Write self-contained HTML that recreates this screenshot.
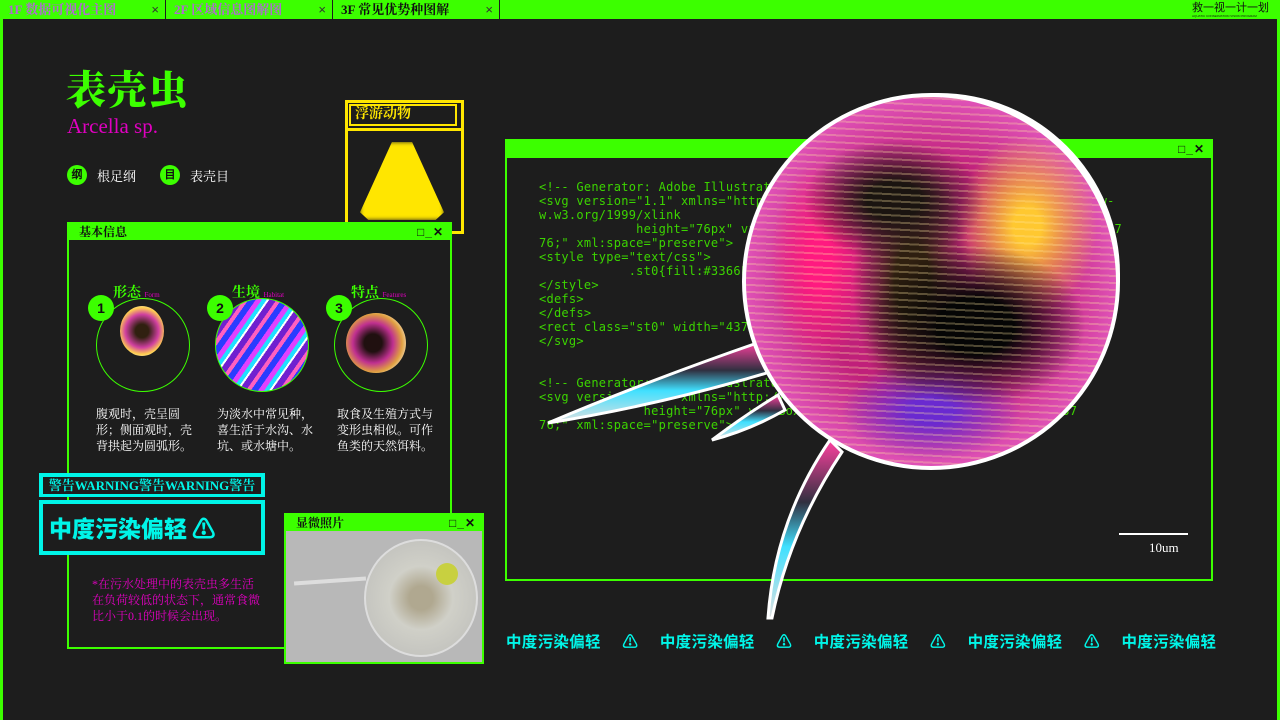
<!DOCTYPE html>
<html><head><meta charset="utf-8"><style>
*{margin:0;padding:0;box-sizing:border-box}
body{width:1280px;height:720px;background:#1d1d1d;position:relative;overflow:hidden;font-family:"Liberation Serif","Noto Serif CJK SC",serif}
.abs{position:absolute}
.g{background:#3cff00}
.tab{position:absolute;top:0;height:20px;background:#3cff00;font-size:13px;font-weight:bold;line-height:20px;padding-left:8px;color:#b06bd0;border-right:1px solid #1d1d1d}
.tab span{position:absolute;right:6px;top:0;color:#333;font-family:"Liberation Sans",sans-serif;font-weight:normal}
.win{position:absolute;border:2px solid #3cff00}
.win .bar{position:absolute;left:0;right:0;top:0;height:16px;background:#3cff00;font-size:12px;font-weight:bold;color:#111;padding-left:10px;line-height:16px}
.win .bar i{position:absolute;right:6px;top:0;font-style:normal;font-family:"Liberation Sans",sans-serif;font-size:12px;color:#111;letter-spacing:1px}
.code{font-family:"DejaVu Sans Mono","Liberation Mono",monospace;color:#3cd400;font-size:12px;line-height:14px;letter-spacing:0.25px;white-space:pre}
.circ{position:absolute;width:94px;height:94px;border:1.5px solid #3cff00;border-radius:50%}
.num{position:absolute;width:26px;height:26px;border-radius:50%;background:#3cff00;color:#111;font-weight:bold;text-align:center;line-height:26px;font-size:14px;font-family:"Liberation Sans",sans-serif}
.lbl{position:absolute;color:#3cff00;font-weight:bold;font-size:14px}
.lbl small{color:#e000c0;font-size:7px;font-weight:normal}
.desc{position:absolute;color:#fff;font-size:12px;line-height:16px;width:120px;white-space:nowrap}
.cy{color:#00f5e8;font-weight:bold;font-family:"Noto Sans CJK SC",sans-serif}
</style></head><body>
<div class="abs g" style="left:0;top:0;width:1280px;height:20px"></div>
<div class="abs g" style="left:0;top:0;width:3px;height:720px"></div>
<div class="abs g" style="right:0;top:0;width:3px;height:720px"></div>
<div class="tab" style="left:0;width:166px">1F 数据可视化主图<span>×</span></div>
<div class="tab" style="left:166px;width:167px">2F 区域信息图解图<span>×</span></div>
<div class="tab" style="left:333px;width:167px;color:#111">3F 常见优势种图解<span>×</span></div>
<div class="abs" style="left:3px;top:19px;width:497px;height:2px;background:#1d1d1d"></div>
<div class="abs" style="left:500px;top:19px;width:777px;height:2px;background:#1d1d1d"></div>
<div class="abs" style="left:1192px;top:1px;font-size:11px;color:#111;font-family:'Noto Sans CJK SC',sans-serif;line-height:13px">救一视一计一划</div>
<div class="abs" style="left:1192px;top:14px;font-size:3px;color:#111;font-family:'Liberation Sans'">AQUATIC CONSERVATION VISION PROGRAM</div>

<div class="abs" style="left:66px;top:64px;font-size:40px;font-weight:900;color:#3cff00;line-height:48px;letter-spacing:1px;font-family:'Noto Serif CJK SC',serif">表壳虫</div>
<div class="abs" style="left:67px;top:114px;font-size:21px;color:#e000c0">Arcella sp.</div>
<div class="abs num" style="left:67px;top:165px;width:20px;height:20px;line-height:20px;font-size:11px">纲</div>
<div class="abs" style="left:97px;top:166px;font-size:13px;color:#fff">根足纲</div>
<div class="abs num" style="left:160px;top:165px;width:20px;height:20px;line-height:20px;font-size:11px">目</div>
<div class="abs" style="left:190px;top:166px;font-size:13px;color:#fff">表壳目</div>

<div class="abs" style="left:345px;top:100px;width:119px;height:134px;border:3px solid #ffe600"></div>
<div class="abs" style="left:349px;top:104px;width:108px;height:22px;border:2px solid #ffe600;color:#ffe600;font-weight:bold;font-size:14px;line-height:18px;padding-left:4px">浮游动物</div>
<div class="abs" style="left:348px;top:128px;width:113px;height:3px;background:#ffe600"></div>
<div class="abs" style="left:360px;top:142px;width:84px;height:78px;background:#ffe600;clip-path:polygon(38% 0,62% 0,100% 90%,90% 100%,10% 100%,0 90%);filter:blur(2px)"></div>

<div class="win" style="left:67px;top:222px;width:385px;height:427px"><div class="bar">基本信息<i>□_✕</i></div></div>
<div class="circ" style="left:96px;top:298px"></div>
<div class="circ" style="left:215px;top:298px;background:repeating-linear-gradient(125deg,#2a3cff 0 6px,#e040ff 6px 11px,#20e0ff 11px 15px,#ffffff 15px 17px,#7020d0 17px 23px,#ff60c0 23px 27px)"></div>
<div class="circ" style="left:334px;top:298px"></div>
<div class="abs" style="left:120px;top:306px;width:44px;height:50px;border-radius:50%;background:radial-gradient(circle at 50% 50%,#302010 20%,#d040a0 50%,#ffd050 70%,#e0e0ff 90%)"></div>
<div class="abs" style="left:346px;top:313px;width:60px;height:60px;border-radius:50%;background:radial-gradient(circle at 45% 50%,#201010 20%,#c03090 45%,#e0a040 65%,#ffffff 88%)"></div>
<div class="num" style="left:88px;top:295px">1</div>
<div class="num" style="left:207px;top:295px">2</div>
<div class="num" style="left:326px;top:295px">3</div>
<div class="lbl" style="left:113px;top:282px">形态 <small>Form</small></div>
<div class="lbl" style="left:232px;top:282px">生境 <small>Habitat</small></div>
<div class="lbl" style="left:351px;top:282px">特点 <small>Features</small></div>
<div class="desc" style="left:96px;top:406px">腹观时，壳呈圆<br>形；侧面观时，壳<br>背拱起为圆弧形。</div>
<div class="desc" style="left:217px;top:406px">为淡水中常见种，<br>喜生活于水沟、水<br>坑、或水塘中。</div>
<div class="desc" style="left:337px;top:406px">取食及生殖方式与<br>变形虫相似。可作<br>鱼类的天然饵料。</div>

<div class="abs" style="left:39px;top:473px;width:226px;height:24px;background:#00f5e8"></div>
<div class="abs" style="left:43px;top:477px;width:218px;height:17px;background:#1d1d1d;color:#00f5e8;font-size:13px;line-height:17px;text-align:center;font-weight:bold">警告WARNING警告WARNING警告</div>
<div class="abs" style="left:39px;top:500px;width:226px;height:55px;background:#00f5e8"></div>
<div class="abs cy" style="left:43px;top:504px;width:218px;height:47px;background:#1d1d1d;font-size:23px;line-height:47px;padding-left:6px;font-weight:900">中度污染偏轻 ⚠</div>
<div class="abs" style="left:92px;top:576px;color:#e000c0;font-size:12px;line-height:16px;width:168px">*在污水处理中的表壳虫多生活在负荷较低的状态下，通常食微比小于0.1的时候会出现。</div>

<div class="win" style="left:284px;top:513px;width:200px;height:151px;background:#b8b8b8"><div class="bar">显微照片<i>□_✕</i></div>
<div class="abs" style="left:78px;top:24px;width:114px;height:118px;border-radius:50%;border:2px solid #ddd;background:radial-gradient(circle at 50% 50%,#b0a890 15%,#d0d0c8 40%,#c0c0bc 85%)"></div>
<div class="abs" style="left:150px;top:48px;width:22px;height:22px;border-radius:50%;background:#c8d040"></div>
<div class="abs" style="left:8px;top:64px;width:72px;height:4px;background:#ddd;transform:rotate(-4deg)"></div>
</div>

<div class="win" style="left:505px;top:139px;width:708px;height:442px"><div class="bar" style="height:17px"><i>□_✕</i></div></div>
<div class="abs code" style="left:539px;top:180px">&lt;!-- Generator: Adobe Illustrator
&lt;svg version="1.1" xmlns="http://www.w3.org/2000/svg" xmlns:xlink="http://ww-
w.w3.org/1999/xlink
             height="76px" viewBox="0 0 437 76" enable-background="new 0 0 437
76;" xml:space="preserve">
&lt;style type="text/css">
            .st0{fill:#3366FF;}
&lt;/style>
&lt;defs>
&lt;/defs>
&lt;rect class="st0" width="437"
&lt;/svg>


&lt;!-- Generator: Adobe Illustrator
&lt;svg version="1.1" xmlns="http://www.w3.org/1999/xlink
              height="76px" viewBox="0 0 437 76" background="new 0 0 437
76;" xml:space="preserve"></div>
<div class="abs" style="left:1119px;top:533px;width:69px;height:1.5px;background:#fff"></div>
<div class="abs" style="left:1149px;top:540px;color:#fff;font-size:13px">10um</div>

<svg class="abs" style="left:0;top:0" width="1280" height="720">
<defs><linearGradient id="sp" x1="0" y1="0" x2="0" y2="1"><stop offset="0" stop-color="#ff40a0"/><stop offset=".35" stop-color="#303040"/><stop offset=".6" stop-color="#40e0ff"/><stop offset="1" stop-color="#e0e0e0"/></linearGradient></defs>
<path d="M548 423 Q650 380 760 342 L770 372 Q660 405 548 423Z" fill="url(#sp)" stroke="#fff" stroke-width="3"/>
<path d="M712 440 Q745 415 778 395 L785 410 Q750 430 712 440Z" fill="url(#sp)" stroke="#fff" stroke-width="3"/>
<path d="M768 618 Q775 520 830 440 L842 452 Q790 530 772 618Z" fill="url(#sp)" stroke="#fff" stroke-width="3"/>
</svg>

<div class="abs" style="left:742px;top:93px;width:378px;height:377px;border-radius:50% 48% 50% 50%;background:#fff"></div>
<div class="abs" style="left:746px;top:97px;width:370px;height:369px;border-radius:50%;background:
radial-gradient(ellipse 110px 80px at 62% 62%,#050505 35%,transparent 100%),
radial-gradient(ellipse 90px 60px at 40% 28%,#1a1410 30%,transparent 100%),
radial-gradient(ellipse 60px 120px at 45% 50%,#302010 30%,transparent 100%),
radial-gradient(ellipse 50px 100px at 20% 45%,#ff1a80 25%,transparent 100%),
radial-gradient(ellipse 70px 90px at 76% 35%,#ffc830 20%,transparent 100%),
radial-gradient(ellipse 90px 50px at 50% 85%,#6a2ad0 25%,transparent 100%),
radial-gradient(circle at 50% 50%,#c0207a 45%,#e860c8 78%,#f8d0f0 94%,#fff 100%)"></div>
<div class="abs" style="left:746px;top:97px;width:370px;height:369px;border-radius:50%;background:repeating-linear-gradient(3deg,rgba(255,255,255,0) 0 5px,rgba(255,230,160,.3) 5px 7px)"></div>

<div class="abs cy" style="left:506px;top:630px;font-size:15.5px;white-space:nowrap;letter-spacing:0.3px;word-spacing:7px">中度污染偏轻&nbsp; ⚠ &nbsp;中度污染偏轻&nbsp; ⚠ &nbsp;中度污染偏轻&nbsp; ⚠ &nbsp;中度污染偏轻&nbsp; ⚠ &nbsp;中度污染偏轻</div>
</body></html>
